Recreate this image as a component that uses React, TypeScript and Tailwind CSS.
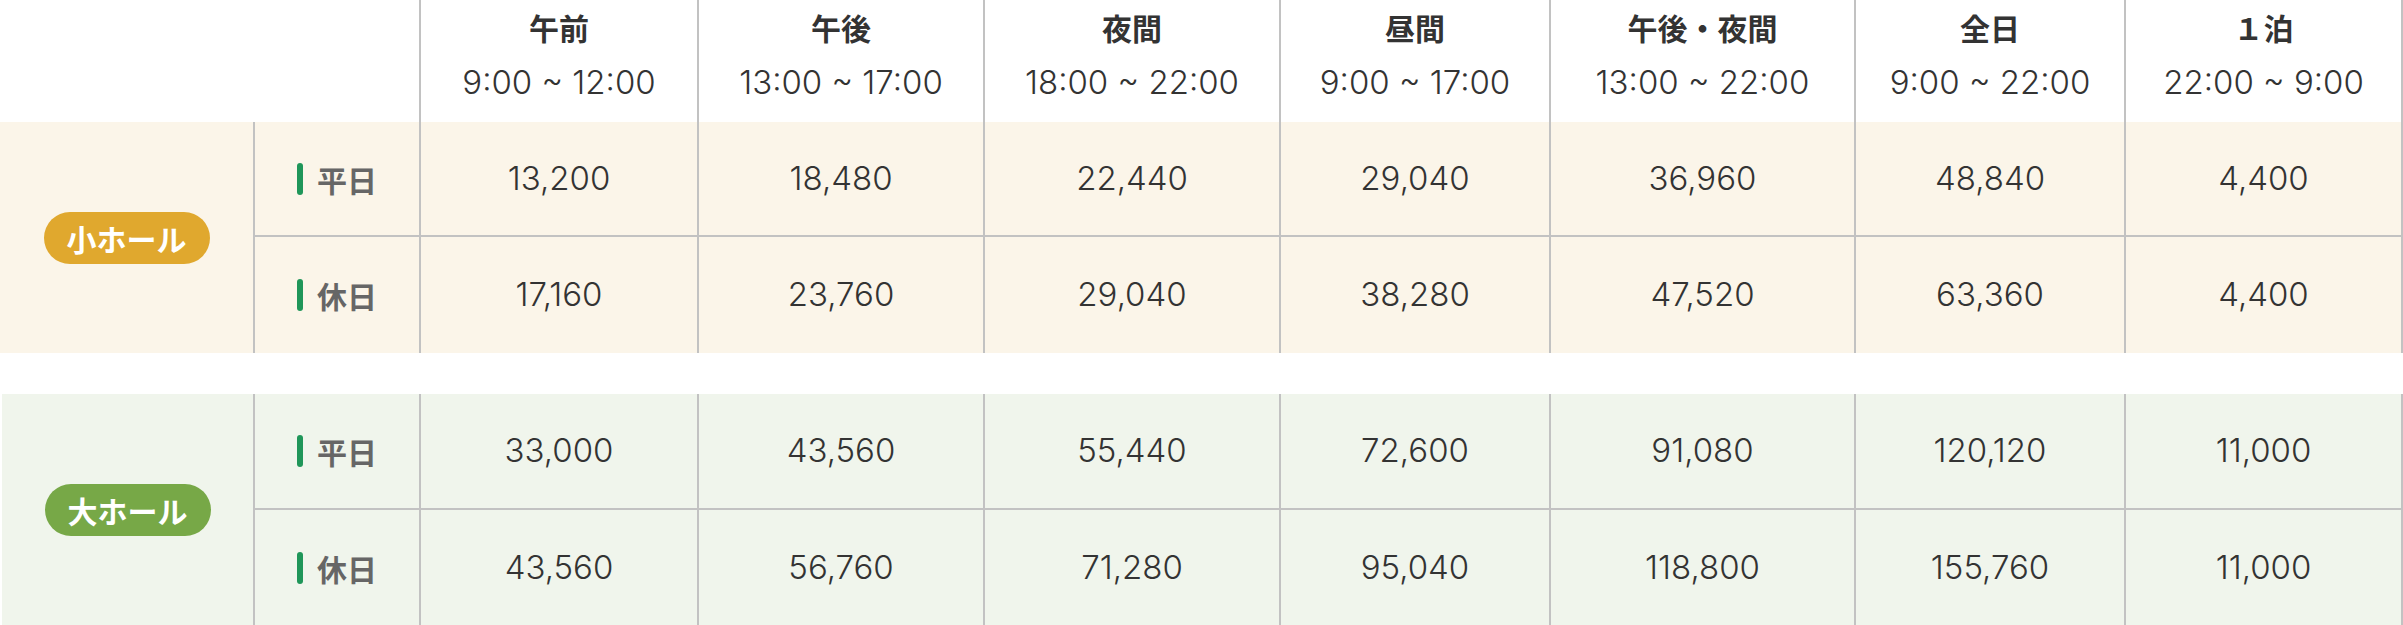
import React from "react";

const COLS = "grid-cols-[253px_166px_278px_286px_296px_270px_305px_270px_279px]";

const headers: [string, string][] = [
  ["午前", "9:00 ~ 12:00"],
  ["午後", "13:00 ~ 17:00"],
  ["夜間", "18:00 ~ 22:00"],
  ["昼間", "9:00 ~ 17:00"],
  ["午後・夜間", "13:00 ~ 22:00"],
  ["全日", "9:00 ~ 22:00"],
  ["１泊", "22:00 ~ 9:00"],
];

const small = [
  ["13,200", "18,480", "22,440", "29,040", "36,960", "48,840", "4,400"],
  ["17,160", "23,760", "29,040", "38,280", "47,520", "63,360", "4,400"],
];
const large = [
  ["33,000", "43,560", "55,440", "72,600", "91,080", "120,120", "11,000"],
  ["43,560", "56,760", "71,280", "95,040", "118,800", "155,760", "11,000"],
];

const NUM_FONT = { fontFamily: 'Inter, "Noto Sans CJK JP", sans-serif' };

function Label({ text }: { text: string }) {
  return (
    <div className="flex items-center justify-center gap-[14px]">
      <span className="block w-[6px] h-[32px] rounded-full bg-[#1f9659]" />
      <span className="text-[30px] font-bold text-[#666666] leading-none">{text}</span>
    </div>
  );
}

function Block({
  name,
  badge,
  bg,
  data,
  rows,
  green,
}: {
  name: string;
  badge: string;
  bg: string;
  data: string[][];
  rows: string;
  green?: boolean;
}) {
  return (
    <div className={`grid ${COLS} ${rows} ${bg}`}>
      <div
        className={`row-span-2 flex items-center justify-center ${
          green ? "border-l-2 border-white" : ""
        }`}
      >
        <span
          className={`${badge} h-[52px] px-[23px] rounded-full flex items-center text-white font-bold text-[30px] leading-none`}
        >
          {name}
        </span>
      </div>
      {data.map((row, ri) => (
        <React.Fragment key={ri}>
          <div
            className={`flex items-center justify-center border-l-2 border-[#c2c2c2] ${
              ri === 0 ? "border-b-2" : ""
            }`}
          >
            <Label text={ri === 0 ? "平日" : "休日"} />
          </div>
          {row.map((v, ci) => (
            <div
              key={ci}
              style={NUM_FONT}
              className={`flex items-center justify-center border-l-2 border-[#c2c2c2] text-[33px] font-light text-[#333333] ${
                ri === 0 ? "border-b-2" : ""
              } ${ci === row.length - 1 ? "border-r-2" : ""}`}
            >
              {v}
            </div>
          ))}
        </React.Fragment>
      ))}
    </div>
  );
}

export default function App() {
  return (
    <div
      className="w-[2403px] h-[625px] bg-white overflow-hidden"
      style={{ fontFamily: '"Noto Sans CJK JP", sans-serif' }}
    >
      <div className={`grid ${COLS} h-[122px]`}>
        <div className="col-span-2" />
        {headers.map(([t, s], i) => (
          <div
            key={i}
            className={`flex flex-col items-center border-l-2 border-[#c2c2c2] ${
              i === headers.length - 1 ? "border-r-2" : ""
            }`}
          >
            <div className="mt-[10px] text-[30px] font-bold text-[#333333] leading-[34px]">{t}</div>
            <div
              style={NUM_FONT}
              className="mt-[20px] text-[33px] font-light text-[#333333] leading-[36px]"
            >
              {s}
            </div>
          </div>
        ))}
      </div>
      <Block
        name="小ホール"
        badge="bg-[#e0a82e]"
        bg="bg-[#fbf5e9]"
        data={small}
        rows="grid-rows-[115px_116px]"
      />
      <div className="h-[41px]" />
      <Block
        name="大ホール"
        badge="bg-[#77a847]"
        bg="bg-[#f0f5ec]"
        data={large}
        rows="grid-rows-[116px_115px]"
        green
      />
    </div>
  );
}
